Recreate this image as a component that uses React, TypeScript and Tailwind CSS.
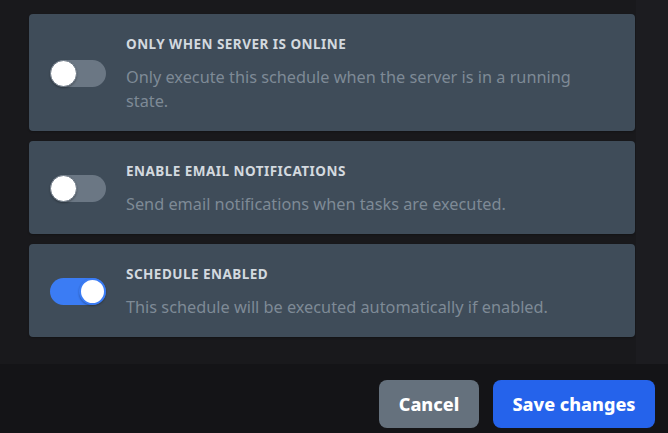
import React from "react";

function Toggle({ on }: { on: boolean }) {
  return (
    <div
      className={
        "relative h-[27px] w-[56px] shrink-0 rounded-full " +
        (on ? "bg-[#3b7cf4]" : "bg-[#6b7784]")
      }
    >
      <div
        className={
          "absolute top-0 h-[27px] w-[27px] rounded-full bg-white shadow-[0_1px_2px_rgba(0,0,0,0.3)] " +
          (on ? "left-[29px] border-2 border-[#3b7cf4]" : "left-0 border border-[#6b7784]")
        }
      />
    </div>
  );
}

function Card({ title, desc, on }: { title: string; desc: string; on: boolean }) {
  return (
    <div className="flex items-center gap-5 rounded-[4px] bg-[#3f4c59] pl-[21px] pr-5 pt-5 pb-[18px] shadow-[0_1px_2px_rgba(0,0,0,0.25)]">
      <Toggle on={on} />
      <div className="flex max-w-[480px] flex-col gap-[11px]">
        <div className="text-[13.5px] font-bold uppercase leading-5 tracking-[0.035em] text-[#d3d9df]">
          {title}
        </div>
        <div className="text-[16.3px] leading-6 text-[#7e8a96]">{desc}</div>
      </div>
    </div>
  );
}

export default function App() {
  return (
    <div
      className="flex h-[433px] w-[668px] flex-col overflow-hidden bg-[#19191c]"
      style={{ fontFamily: '"Noto Sans", "Open Sans", sans-serif' }}
    >
      <div className="flex flex-1">
        <div className="flex w-[636px] flex-col gap-[10px] pl-[29px] pr-[1px] pt-[14px]">
          <Card
            title="Only when server is online"
            desc="Only execute this schedule when the server is in a running state."
            on={false}
          />
          <Card
            title="Enable email notifications"
            desc="Send email notifications when tasks are executed."
            on={false}
          />
          <Card
            title="Schedule enabled"
            desc="This schedule will be executed automatically if enabled."
            on={true}
          />
        </div>
        <div className="flex-1 bg-[#1c1c20]" />
      </div>
      <div className="flex h-[69px] justify-end gap-[14px] bg-[#141417] pr-[13px] pt-4">
        <button className="h-12 w-[100px] rounded-lg bg-[#65717d] text-[18px] font-extrabold text-white">
          Cancel
        </button>
        <button className="h-12 w-[162px] rounded-lg bg-[#2563eb] text-[18px] font-extrabold text-white">
          Save changes
        </button>
      </div>
    </div>
  );
}
